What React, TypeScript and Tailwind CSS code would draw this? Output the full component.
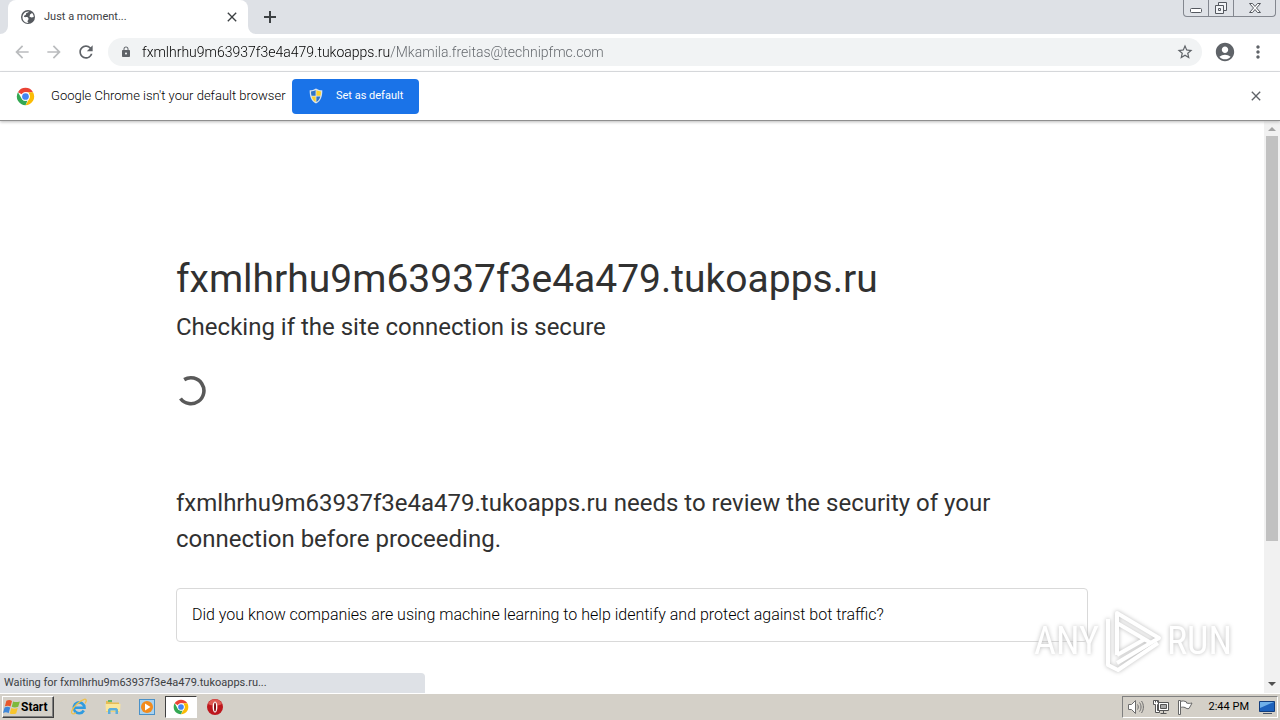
import type { ReactNode } from 'react';
import { MdAccountCircle, MdArrowBack, MdArrowForward, MdClose, MdLock, MdMoreVert, MdRefresh, MdStarBorder } from 'react-icons/md';

const HOST = 'fxmlhrhu9m63937f3e4a479.tukoapps.ru';

function ChromeLogo({ className }: { className: string }) {
  return (
    <svg className={className} viewBox="0 0 48 48" aria-hidden="true">
      <circle cx="24" cy="24" r="22" fill="#fff" />
      <path d="M24 2a22 22 0 0 1 19.05 11H24a11 11 0 0 0-9.53 5.5L4.95 13A22 22 0 0 1 24 2z" fill="#ea4335" />
      <path d="M43.05 13A22 22 0 0 1 24 46l9.53-16.5A11 11 0 0 0 33.5 18.5L31 13z" fill="#fbbc05" />
      <path d="M4.95 13l9.52 16.5A11 11 0 0 0 24 35c1.8 0 3.5-.4 5-1.2L24 46A22 22 0 0 1 4.95 13z" fill="#34a853" />
      <circle cx="24" cy="24" r="10.5" fill="#fff" />
      <circle cx="24" cy="24" r="8.5" fill="#4285f4" />
    </svg>
  );
}

function ShieldIcon() {
  return (
    <svg className="h-4 w-4" viewBox="0 0 16 16" aria-hidden="true">
      <path d="M8 .5c2 1.3 4 1.8 6.300 1.800C14.500 8 13 13 8 15.500 3 13 1.500 8 1.700 2.300 4 2.300 6 1.800 8 .5z" fill="#d9e4ee" />
      <path d="M7.600 2C6 3 4.500 3.300 3 3.400c0 1.500.1 3 .5 4.400h4.100z" fill="#2f74c8" />
      <path d="M8.400 2c1.600 1 3.100 1.300 4.600 1.400 0 1.500-.1 3-.5 4.400H8.400z" fill="#fbd12b" />
      <path d="M3.700 8.500h3.900v5.600C5.500 12.900 4.300 11 3.700 8.500z" fill="#fbd12b" />
      <path d="M12.300 8.500H8.400v5.600c2.100-1.200 3.300-3.100 3.900-5.600z" fill="#2f74c8" />
    </svg>
  );
}

function WindowControls() {
  return (
    <div className="mr-1 ml-auto flex h-[17px] rounded-b border border-t-0 border-[#83878f] bg-[#dfe2e7]">
      <button aria-label="Minimize" className="flex w-[25px] items-center justify-center border-r border-[#83878f]">
        <svg className="h-4 w-4" viewBox="0 0 16 16" fill="#fff" stroke="#54585f">
          <rect x="2.500" y="8.500" width="11" height="4" rx="1" />
        </svg>
      </button>
      <button aria-label="Restore" className="flex w-[25px] items-center justify-center border-r border-[#83878f]">
        <svg className="h-4 w-4" viewBox="0 0 16 16" fill="#f2f4f7" stroke="#54585f">
          <path d="M5.500 2.500h8v8h-8z" />
          <path d="M2.500 5.500h8v8h-8z" />
          <path d="M5.500 8.500h2v2h-2z" />
        </svg>
      </button>
      <button aria-label="Close window" className="flex w-[41px] items-center justify-center">
        <svg className="h-4 w-4" viewBox="0 0 16 16" fill="#fff" stroke="#54585f">
          <path d="M2.500 3.500h3l2.500 3 2.500-3h3l-4 4.500 4 4.500h-3L8 9.500l-2.500 3h-3l4-4.500z" />
        </svg>
      </button>
    </div>
  );
}

function TabStrip() {
  return (
    <header className="flex h-[34px] shrink-0 items-start bg-[#dee1e6]">
      <svg className="h-2 w-2 self-end" viewBox="0 0 8 8" aria-hidden="true">
        <path d="M8 0v8H0a8 8 0 0 0 8-8z" fill="#fff" />
      </svg>
      <div className="flex h-full w-60 items-center rounded-t-lg bg-white pr-2 pl-3 text-[#3c4043]">
        {/* the globe glyph is drawn solid, with the land cut out */}
        <svg className="h-4 w-4 shrink-0" viewBox="0 0 16 16" aria-hidden="true">
          <circle cx="8" cy="8" r="7" fill="#55595e" />
          <path d="M9 2.500c-.5 1-1.500 1-2.500 1.500s0 1.500-1 2-1.500.5-1.500 1.500 2 .5 3 .5 1.500 1 1.500 2-1 1.500-1 2.500l1 1.500c-3.500.2-6-2.500-6-5.700 0-3.300 2.800-6.300 6.500-5.800z" fill="#fff" />
          <path d="M10 5.500l2-1.500c1 .8 1.700 2.300 1.700 4l-2.200.5-2-.8z" fill="#fff" />
        </svg>
        <span className="ml-2 text-[11px]">Just a moment...</span>
        <button aria-label="Close tab" className="ml-auto">
          <MdClose className="h-4 w-4" />
        </button>
      </div>
      <svg className="h-2 w-2 self-end" viewBox="0 0 8 8" aria-hidden="true">
        <path d="M0 0v8h8a8 8 0 0 1-8-8z" fill="#fff" />
      </svg>
      <button aria-label="New tab" className="flex h-full w-7 items-center justify-center">
        <svg className="h-3 w-3" viewBox="0 0 12 12" stroke="#3c4043" strokeWidth="2">
          <path d="M6 0v12M0 6h12" />
        </svg>
      </button>
      <WindowControls />
    </header>
  );
}

function Toolbar() {
  return (
    <nav className="flex h-[38px] shrink-0 items-center border-b border-[#dadce0] bg-white pr-3 pb-px text-[#5f6368]">
      <div className="flex gap-3 pl-3">
        <button aria-label="Back" className="text-[#babcbe]"><MdArrowBack className="h-5 w-5" /></button>
        <button aria-label="Forward" className="text-[#babcbe]"><MdArrowForward className="h-5 w-5" /></button>
        <button aria-label="Reload"><MdRefresh className="h-5 w-5" /></button>
      </div>
      <div className="ml-3 flex h-7 flex-1 items-center rounded-full bg-[#f1f3f4] pr-2 pl-3">
        <MdLock className="h-3 w-3 shrink-0" />
        <input
          type="text"
          aria-label="Address"
          defaultValue={`${HOST}/Mkamila.freitas@technipfmc.com`}
          className="ml-[10px] flex-1 bg-linear-to-r from-black from-[248px] to-[#5f6368] to-[248px] bg-clip-text text-sm font-light text-transparent outline-none"
        />
        <button aria-label="Bookmark this page"><MdStarBorder className="h-[18px] w-[18px]" /></button>
      </div>
      <button aria-label="Profile" className="ml-3"><MdAccountCircle className="h-[22px] w-[22px]" /></button>
      <button aria-label="Menu" className="ml-3"><MdMoreVert className="h-5 w-5" /></button>
    </nav>
  );
}

function InfoBar() {
  return (
    <div className="z-10 flex h-[49px] shrink-0 items-center border-b border-[#8f8f8f] bg-white px-4 shadow-[0_1px_3px_#bbb]">
      <ChromeLogo className="h-[19px] w-[19px]" />
      <span className="ml-4 w-[229px] text-[13px] font-light whitespace-nowrap text-black">Google Chrome isn't your default browser</span>
      <button className="ml-3 flex h-[35px] w-[127px] items-center rounded bg-[#1a73e8] pl-4 text-[11px] text-white">
        <ShieldIcon />
        <span className="ml-3">Set as default</span>
      </button>
      <button aria-label="Dismiss" className="ml-auto text-[#5f6368]">
        <MdClose className="h-4 w-4" />
      </button>
    </div>
  );
}

function Spinner() {
  return (
    <svg className="my-[30px] h-[31px] w-[31px]" viewBox="0 0 31 31" fill="none" role="img" aria-label="Loading">
      <path d="M8.200 4.600A13 13 0 1 1 4.500 23.500" stroke="#595959" strokeWidth="3.600" />
    </svg>
  );
}

function Watermark() {
  return (
    <div className="absolute right-12 bottom-5 flex items-center gap-1 font-['Roboto_Condensed','Liberation_Sans_Narrow','Liberation_Sans',sans-serif] text-[38px] text-white drop-shadow-[0_0_2px_#bbb]">
      <span>ANY</span>
      <svg className="h-16 w-[60px]" viewBox="0 0 60 64" fill="none" stroke="#fff" strokeWidth="4" strokeLinejoin="round" aria-hidden="true">
        <path d="M14 46V4l42 25-42 25" />
        <path d="M14 14l34 20" />
        <path d="M5 10v46l10 5 40-27" />
        <path d="M14 46l28-16" />
      </svg>
      <span>RUN</span>
    </div>
  );
}

function Scrollbar() {
  return (
    <div className="flex w-4 shrink-0 flex-col items-center bg-[#f1f1f1]" aria-hidden="true">
      <svg className="h-[15px] w-4 shrink-0" viewBox="0 0 16 15"><path d="M4 10l4-4 4 4z" fill="#a3a3a3" /></svg>
      <div className="min-h-0 w-full flex-1 px-0.5">
        <div className="h-3/4 bg-[#c1c1c1]" />
      </div>
      <svg className="h-[17px] w-4 shrink-0" viewBox="0 0 16 17"><path d="M4 6l4 4 4-4z" fill="#505050" /></svg>
    </div>
  );
}

function Page() {
  return (
    <div className="relative flex min-h-0 flex-1 bg-white">
      <main className="min-w-0 flex-1 overflow-hidden pt-32 text-[#313131]">
        <div className="mx-auto max-w-[960px] px-6">
          <h1 className="text-[39px] leading-[60px]">{HOST}</h1>
          <h2 className="text-2xl leading-9">Checking if the site connection is secure</h2>
          <Spinner />
          <p className="mt-[79px] text-2xl leading-9">
            {`${HOST} needs to review the security of your connection before proceeding.`}
          </p>
          <div className="mt-[31px] rounded border border-[#d9d9d9] px-[15px] py-[14px] text-base font-light text-black">
            Did you know companies are using machine learning to help identify and protect against bot traffic?
          </div>
        </div>
        <Watermark />
      </main>
      <Scrollbar />
      <div className="absolute bottom-0 left-0 h-5 w-[425px] rounded-tr bg-[#dee1e6] px-1 text-[11px] leading-5 text-[#3c4043]">
        {`Waiting for ${HOST}...`}
      </div>
    </div>
  );
}

function TaskButton({ label, active, children }: { label: string; active?: boolean; children: ReactNode }) {
  return (
    <button
      aria-label={label}
      className={
        active
          ? 'flex h-[22px] w-8 items-center justify-center border border-t-[#404040] border-r-white border-b-white border-l-[#404040] bg-white'
          : 'flex h-[22px] w-8 items-center justify-center'
      }
    >
      {children}
    </button>
  );
}

function Taskbar() {
  return (
    <footer className="flex h-[27px] shrink-0 items-center border-t border-white bg-[#d4d0c8] px-0.5 text-black">
      <button className="flex h-[22px] w-[52px] items-center border border-t-white border-r-[#404040] border-b-[#404040] border-l-white text-xs font-bold shadow-[inset_-1px_-1px_0_#808080]">
        <svg className="h-[18px] w-[18px]" viewBox="0 0 16 16" aria-hidden="true">
          <path d="M3 2.500c2-1 3.500-.8 5 .1L6.700 7.500C5 6.600 3.500 6.700 1.700 7.400z" fill="#e8582c" />
          <path d="M9 3c1.800.8 3.500.8 6 0l-1.500 4.800c-2 .8-4 .8-5.700 0z" fill="#7db93b" />
          <path d="M1.400 8.400c1.800-.8 3.300-.8 5 .1L5 13.500C3.500 12.500 2 12.500 0 13.300z" fill="#3f87d9" />
          <path d="M7.400 8.900c1.900.8 3.700.7 5.700-.1l-1.400 4.900c-2 .8-4 .8-5.700 0z" fill="#f8c52c" />
        </svg>
        Start
      </button>
      <div className="ml-[9px] flex items-center gap-0.5">
        <TaskButton label="Internet Explorer">
          <svg className="h-[18px] w-[18px]" viewBox="0 0 18 18" fill="none">
            <path d="M13.800 12.500A5.400 5.400 0 1 1 14.500 9.700H5" stroke="#2f9be0" strokeWidth="2.600" />
            <path d="M15 5.500c2-3 1.500-4.800-.8-4.200C9.500 2.600 3 9 1.700 13.200.9 16 3 16.700 6 14.800" stroke="#efc04a" strokeWidth="1.300" />
          </svg>
        </TaskButton>
        <TaskButton label="File Explorer">
          <svg className="h-[18px] w-[18px]" viewBox="0 0 18 18">
            <path d="M2 3h5l1 1.500h7V14H2z" fill="#e5bd55" />
            <path d="M4 2h4v2H4z" fill="#67b56b" />
            <path d="M1.500 6h15L16 13.500H2z" fill="#fae69b" />
            <path d="M4 16v-4.500l1.500-1.500h7l1.500 1.500V16h-2.500v-3.500h-5V16z" fill="#5caedb" />
          </svg>
        </TaskButton>
        <TaskButton label="Media Player">
          <svg className="h-[18px] w-[18px]" viewBox="0 0 18 18">
            <rect x="1.500" y="1.500" width="15" height="15" fill="#a9d2ef" stroke="#4a91c8" />
            <circle cx="9" cy="9" r="6" fill="#f28b1d" />
            <path d="M7 5.500v7l5.500-3.500z" fill="#fff" />
          </svg>
        </TaskButton>
        <TaskButton label="Chrome" active>
          <ChromeLogo className="h-4 w-4" />
        </TaskButton>
        <TaskButton label="Opera">
          <svg className="h-[18px] w-[18px]" viewBox="0 0 18 18">
            <circle cx="9" cy="9" r="8" fill="#bd171d" />
            <path d="M2 6a7.500 7.500 0 0 1 14 0c-4 2-10 2-14 0z" fill="#df5a53" />
            <ellipse cx="9" cy="9" rx="2.400" ry="5.600" fill="#fff" />
            <ellipse cx="9" cy="9" rx="1" ry="4.600" fill="#7f0c10" />
          </svg>
        </TaskButton>
      </div>
      <div className="ml-auto flex h-[22px] items-center border border-t-[#808080] border-r-white border-b-white border-l-[#808080] pr-0.5 pl-1">
        <div className="flex items-center gap-2">
          <svg className="h-4 w-[18px]" viewBox="0 0 18 16" fill="none" stroke="#6c6c6c" aria-label="Volume" role="img">
            <path d="M1.500 5.500h3l4-4v13l-4-4h-3z" fill="#fff" />
            <path d="M10.500 5.500c1 1.500 1 3.500 0 5M12.500 3.500c2 2.500 2 6.500 0 9M14.500 2c2.500 3.500 2.500 8.500 0 12" />
          </svg>
          <svg className="h-4 w-4" viewBox="0 0 16 16" fill="#fff" stroke="#555" aria-label="Network" role="img">
            <path d="M5.500 3.500h10v8h-10z" />
            <path d="M7.500 5.500h6v4h-6z" fill="#a9a9a9" />
            <path d="M7.500 14.500h6M10.500 11.500v3" />
            <path d="M.5 1.500h5v4h-1v6h2v2h-4v-8h-2zM2.500 1.500v2M4.500 1.500v2" />
          </svg>
          <svg className="h-4 w-4" viewBox="0 0 16 16" fill="#fff" stroke="#666" aria-label="Action Center" role="img">
            <path d="M1.500 1.500h2v14h-2z" />
            <path d="M3.500 2.500c2-1 4-.5 6 .5v1c2 .5 3.500.5 5.500 0-1 2-2 4-3 5.500-1.500.5-2.500 0-4-1-1.500-.5-3-.5-4.500 0z" />
          </svg>
        </div>
        <span className="mr-2.5 ml-4 text-[11px]">2:44 PM</span>
        <svg className="h-4 w-4" viewBox="0 0 16 16" aria-label="Show desktop" role="img">
          <path d="M.5 2.500h15v10H.5z" fill="#1d62bd" stroke="#123d7d" />
          <path d="M1 3h14L1 9z" fill="#6fb0ea" />
          <path d="M4 14h9v1H4z" fill="#4a5568" />
        </svg>
      </div>
    </footer>
  );
}

export default function App() {
  return (
    <div className="flex h-screen flex-col overflow-hidden bg-white font-['Tahoma','Roboto',sans-serif]">
      <TabStrip />
      <Toolbar />
      <InfoBar />
      <Page />
      <Taskbar />
    </div>
  );
}
